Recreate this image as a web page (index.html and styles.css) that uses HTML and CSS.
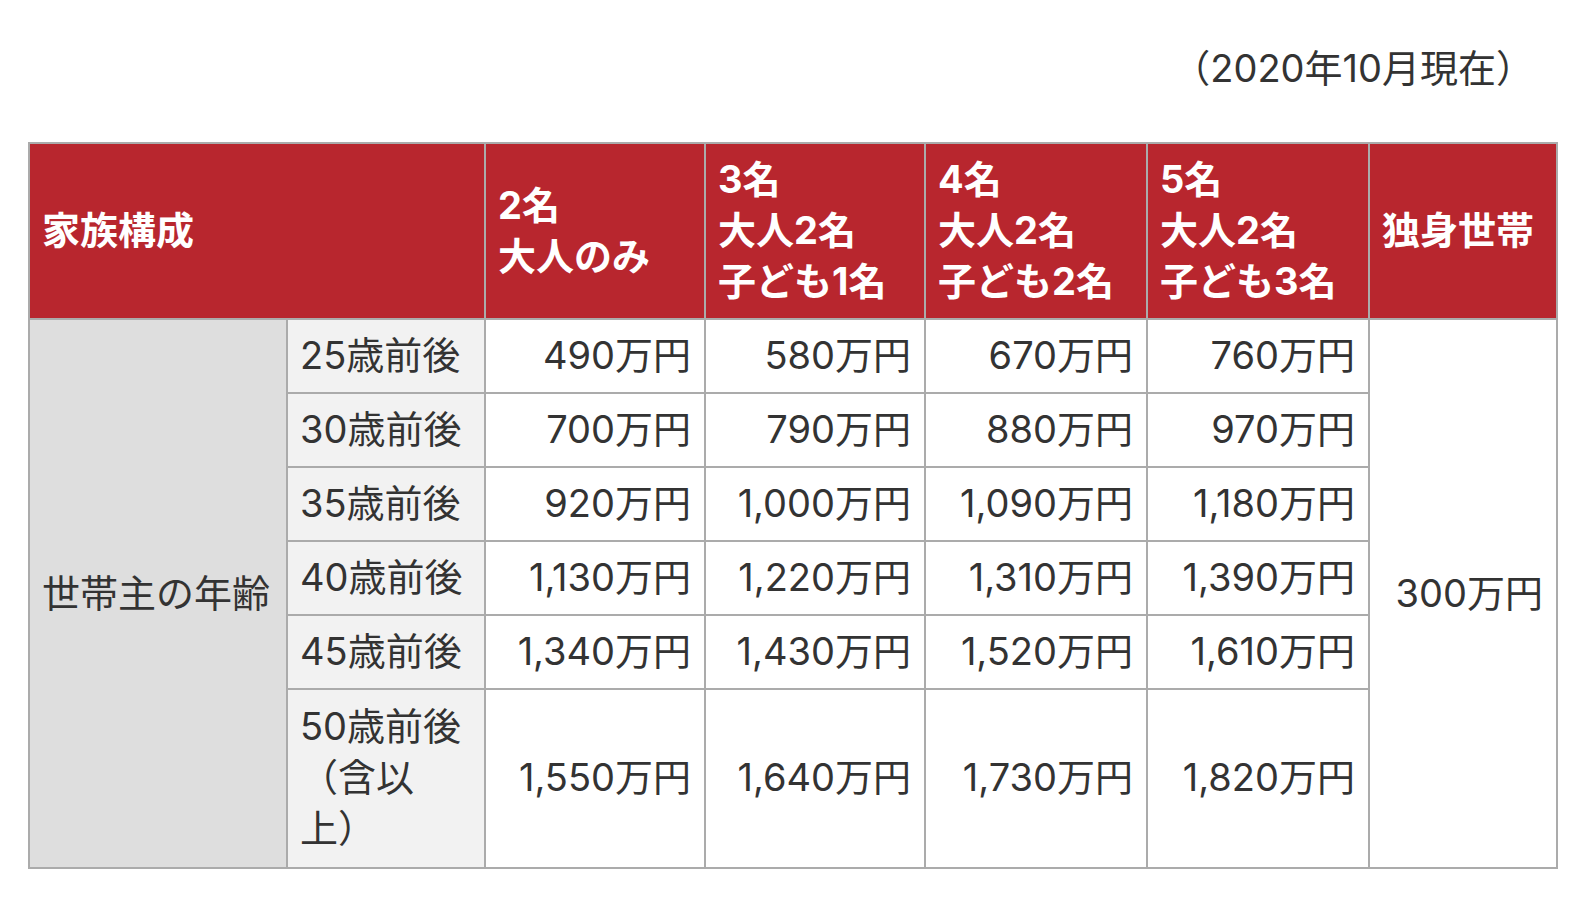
FILE: index.html
```html
<!DOCTYPE html>
<html lang="ja">
<head>
<meta charset="utf-8">
<title>世帯主の年齢別 必要保障額</title>
<link rel="stylesheet" href="styles.css">
</head>
<body>
<div class="page">
  <p class="asof">（2020年10月現在）</p>
  <table class="grid">
    <colgroup>
      <col class="c1"><col class="c2"><col class="c3"><col class="c4"><col class="c5"><col class="c6"><col class="c7">
    </colgroup>
    <thead>
      <tr>
        <th colspan="2">家族構成</th>
        <th>2名<br>大人のみ</th>
        <th>3名<br>大人2名<br>子ども1名</th>
        <th>4名<br>大人2名<br>子ども2名</th>
        <th>5名<br>大人2名<br>子ども3名</th>
        <th>独身世帯</th>
      </tr>
    </thead>
    <tbody>
      <tr>
        <td class="group" rowspan="6">世帯主の年齢</td>
        <td class="age">25歳前後</td>
        <td class="num">490万円</td>
        <td class="num">580万円</td>
        <td class="num">670万円</td>
        <td class="num">760万円</td>
        <td class="num single" rowspan="6">300万円</td>
      </tr>
      <tr>
        <td class="age">30歳前後</td>
        <td class="num">700万円</td>
        <td class="num">790万円</td>
        <td class="num">880万円</td>
        <td class="num">970万円</td>
      </tr>
      <tr>
        <td class="age">35歳前後</td>
        <td class="num">920万円</td>
        <td class="num">1,000万円</td>
        <td class="num">1,090万円</td>
        <td class="num">1,180万円</td>
      </tr>
      <tr>
        <td class="age">40歳前後</td>
        <td class="num">1,130万円</td>
        <td class="num">1,220万円</td>
        <td class="num">1,310万円</td>
        <td class="num">1,390万円</td>
      </tr>
      <tr>
        <td class="age">45歳前後</td>
        <td class="num">1,340万円</td>
        <td class="num">1,430万円</td>
        <td class="num">1,520万円</td>
        <td class="num">1,610万円</td>
      </tr>
      <tr class="last">
        <td class="age">50歳前後（含以上）</td>
        <td class="num">1,550万円</td>
        <td class="num">1,640万円</td>
        <td class="num">1,730万円</td>
        <td class="num">1,820万円</td>
      </tr>
    </tbody>
  </table>
</div>
</body>
</html>
```
FILE: styles.css
```css
* { box-sizing: border-box; }

html, body {
  margin: 0;
  padding: 0;
  background: #ffffff;
}

body {
  font-family: "Inter", "Noto Sans CJK JP", "Noto Sans", sans-serif;
  color: #333333;
  font-size: 38px;
  line-height: 51px;
  text-spacing-trim: space-all;
}

.page {
  padding: 42px 34px 0 28px;
}

.asof {
  margin: 0 0 48px 0;
  padding-right: 24px;
  text-align: right;
  line-height: 52px;
}

.grid {
  table-layout: fixed;
  border-collapse: separate;
  border-spacing: 0;
  width: 1530px;
  border-top: 2px solid #ababab;
  border-left: 2px solid #ababab;
}

.c1 { width: 258px; }
.c2 { width: 198px; }
.c3 { width: 220px; }
.c4 { width: 220px; }
.c5 { width: 222px; }
.c6 { width: 222px; }
.c7 { width: 188px; }

.grid th,
.grid td {
  border-right: 2px solid #ababab;
  border-bottom: 2px solid #ababab;
  padding: 10px 12px 11px 12px;
  vertical-align: middle;
  font-size: 38px;
  line-height: 51px;
}

.grid th {
  background: #b8262e;
  color: #ffffff;
  font-weight: 700;
  text-align: left;
}

.grid td {
  background: #ffffff;
  color: #333333;
  font-weight: 400;
}

.grid td.group {
  background: #dedede;
  text-align: left;
  white-space: nowrap;
}

.grid td.age {
  background: #f2f2f2;
  text-align: left;
}

.grid tr.last td {
  padding-top: 11px;
  padding-bottom: 13px;
}

.grid td.num {
  text-align: right;
  padding-right: 13px;
  white-space: nowrap;
}
```
